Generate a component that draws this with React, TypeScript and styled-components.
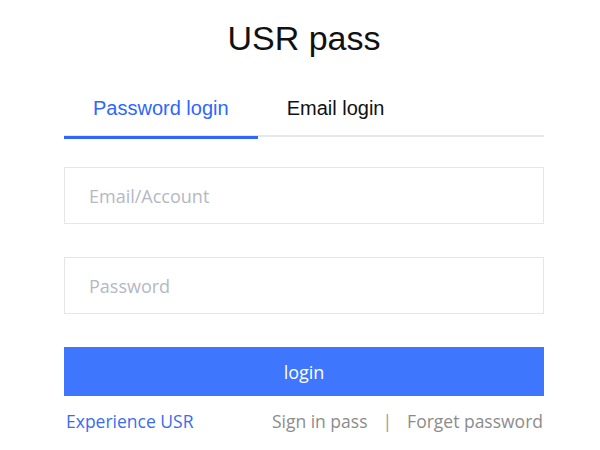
import { useState } from 'react'
import styled, { createGlobalStyle } from 'styled-components'

const GlobalStyle = createGlobalStyle`
  html, body {
    margin: 0;
    padding: 0;
    background: #ffffff;
  }
  * {
    box-sizing: border-box;
  }
`

const Page = styled.div`
  width: 600px;
  height: 450px;
  display: flex;
  padding: 17px 0 0 64px;
`

const Panel = styled.div`
  width: 480px;
  display: flex;
  flex-direction: column;
`

const Title = styled.h1`
  margin: 0;
  height: 42px;
  line-height: 42px;
  text-align: center;
  font-family: 'Liberation Sans', Arial, sans-serif;
  font-size: 34px;
  font-weight: normal;
  color: #111111;
`

const Tabs = styled.div`
  display: flex;
  margin-top: 31px;
  border-bottom: 2px solid #e6e8ee;
  height: 47px;
`

const Tab = styled.button<{ $active: boolean }>`
  position: relative;
  height: 47px;
  padding: 0 29px 11px;
  border: none;
  background: none;
  cursor: pointer;
  font-family: 'Liberation Sans', Arial, sans-serif;
  font-size: 20px;
  line-height: 24px;
  color: ${({ $active }) => ($active ? '#2f66ff' : '#111111')};
  &::after {
    content: '';
    position: absolute;
    left: 0;
    right: 0;
    bottom: -2px;
    height: 3px;
    background: ${({ $active }) => ($active ? '#2f66ff' : 'transparent')};
  }
`

const Form = styled.div`
  display: flex;
  flex-direction: column;
  gap: 33px;
  margin-top: 30px;
`

const Field = styled.input`
  width: 100%;
  height: 57px;
  padding: 0 24px;
  border: 1px solid #e3e5ef;
  outline: none;
  font-family: 'Open Sans', 'Noto Sans', sans-serif;
  font-size: 18px;
  color: #333333;
  &::placeholder {
    color: #b4b8c4;
  }
`

const LoginButton = styled.button`
  width: 100%;
  height: 49px;
  border: none;
  background: #3e77fe;
  color: #ffffff;
  cursor: pointer;
  font-family: 'Open Sans', 'Noto Sans', sans-serif;
  font-size: 18px;
  font-weight: 500;
`

const Links = styled.div`
  display: flex;
  justify-content: space-between;
  align-items: center;
  margin-top: 13px;
  padding: 0 1px 0 2px;
  font-family: 'Open Sans', 'Noto Sans', sans-serif;
  font-size: 17.5px;
`

const BlueLink = styled.a`
  color: #3a6cf0;
  text-decoration: none;
  cursor: pointer;
`

const Group = styled.div`
  display: flex;
  align-items: center;
  gap: 15px;
`

const GreyLink = styled.a`
  color: #8c8c8c;
  text-decoration: none;
  cursor: pointer;
`

const Divider = styled.span`
  color: #9a9a9a;
`

const App = () => {
  const [tab, setTab] = useState<'password' | 'email'>('password')

  return (
    <Page>
      <GlobalStyle />
      <Panel>
        <Title>USR pass</Title>
        <Tabs>
          <Tab $active={tab === 'password'} onClick={() => setTab('password')}>
            Password login
          </Tab>
          <Tab $active={tab === 'email'} onClick={() => setTab('email')}>
            Email login
          </Tab>
        </Tabs>
        <Form>
          <Field placeholder='Email/Account' />
          <Field type='password' placeholder='Password' />
          <LoginButton>login</LoginButton>
        </Form>
        <Links>
          <BlueLink>Experience USR</BlueLink>
          <Group>
            <GreyLink>Sign in pass</GreyLink>
            <Divider>|</Divider>
            <GreyLink>Forget password</GreyLink>
          </Group>
        </Links>
      </Panel>
    </Page>
  )
}

export default App
